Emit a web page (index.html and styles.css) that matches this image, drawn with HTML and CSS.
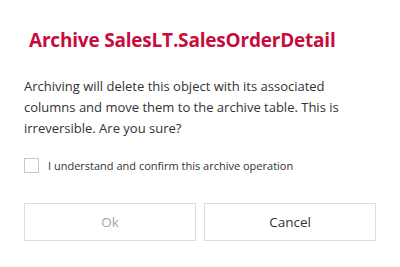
FILE: index.html
```html
<!DOCTYPE html>
<html>
<head>
<meta charset="utf-8">
<link rel="stylesheet" href="styles.css">
</head>
<body>
<div class="dialog">
  <h1 class="title">Archive SalesLT.SalesOrderDetail</h1>
  <p class="message">Archiving will delete this object with its associated columns and move them to the archive table. This is irreversible. Are you sure?</p>
  <label class="confirm">
    <span class="box"></span>
    <span class="confirm-text">I understand and confirm this archive operation</span>
  </label>
  <div class="actions">
    <button class="btn btn-disabled">Ok</button>
    <button class="btn">Cancel</button>
  </div>
</div>
</body>
</html>
```
FILE: styles.css
```css
html, body {
  margin: 0;
  padding: 0;
  background: #ffffff;
}
body {
  font-family: "Open Sans", "Noto Sans", sans-serif;
  color: #333333;
  width: 400px;
  height: 267px;
  overflow: hidden;
}
.dialog {
  padding: 26px 24px 0 24px;
}
.title {
  margin: 0 0 0 5px;
  font-size: 19px;
  font-weight: 700;
  line-height: 28px;
  color: #c60d3e;
  letter-spacing: -0.2px;
}
.message {
  margin: 22px 0 0 0;
  font-size: 13px;
  line-height: 21px;
  color: #333333;
}
.confirm {
  display: flex;
  align-items: center;
  gap: 9px;
  margin-top: 19px;
}
.box {
  width: 13px;
  height: 13px;
  border: 1px solid #c8c8c8;
  background: #fff;
  flex: none;
}
.confirm-text {
  font-size: 11px;
  color: #333333;
}
.actions {
  display: flex;
  gap: 8px;
  margin-top: 30px;
}
.btn {
  flex: 1;
  height: 38px;
  border: 1px solid #dcdcdc;
  background: #ffffff;
  font-family: "Open Sans", "Noto Sans", sans-serif;
  font-size: 13.5px;
  color: #333333;
  padding: 0;
}
.btn-disabled {
  color: #a6a6a6;
}
```
